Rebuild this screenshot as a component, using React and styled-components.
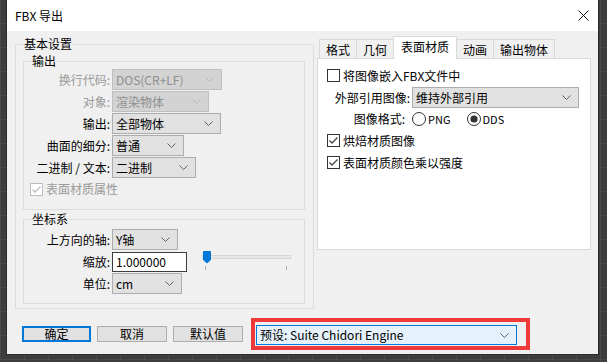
import React from 'react';
import styled, { createGlobalStyle } from 'styled-components';

const Global = createGlobalStyle`
  html, body { margin: 0; padding: 0; }
  body {
    width: 607px; height: 362px; overflow: hidden;
    background: #3c3c3c;
    font-family: "Noto Sans CJK SC", "Noto Sans", sans-serif;
    font-size: 12px;
    color: #000;
  }
`;

const Desktop = styled.div`
  width: 607px; height: 362px; box-sizing: border-box;
  padding-left: 7px;
  background-color: #3d3d3d;
  background-image:
    linear-gradient(90deg, rgba(255,255,255,0.06) 1px, transparent 1px),
    linear-gradient(0deg, rgba(255,255,255,0.06) 1px, transparent 1px);
  background-size: 24px 24px;
  display: flex; align-items: flex-start;
`;

const Dialog = styled.div`
  width: 591px; height: 354px;
  background: #f0f0f0;
  display: flex; flex-direction: column;
  box-shadow: 0 0 0 1px #2b2b2b;
`;

const TitleBar = styled.div`
  height: 31px; flex-shrink: 0;
  background: #fff;
  display: flex; align-items: center; justify-content: space-between;
  padding: 0 9px 0 8px;
  font-size: 12px; line-height: 16px;
`;

const Body = styled.div`
  flex: 1; display: flex; flex-direction: column;
`;

const TopSection = styled.div`
  height: 278px; display: flex; align-items: flex-start;
`;

const GroupBox = styled.div`
  position: relative;
  box-sizing: border-box;
  border: 1px solid #dcdcdc;
  width: ${p => p.$w}px;
  height: ${p => p.$h}px;
  padding: ${p => p.$pad};
  display: flex; flex-direction: column;
  gap: ${p => p.$gap || 0}px;
`;

const OuterGroup = styled(GroupBox)`
  margin: 13px 0 0 8px;
`;

const Legend = styled.span`
  position: absolute; top: -9px; left: 7px;
  background: #f0f0f0; padding: 0 1px;
  font-size: 12px; line-height: 16px;
`;

const Rows = styled.div`
  display: flex; flex-direction: column; gap: 1px;
`;

const Row = styled.div`
  display: flex; align-items: center; height: 21px;
  margin-top: ${p => p.$mt || 0}px;
`;

const Label = styled.div`
  width: ${p => p.$w || 88}px; box-sizing: border-box;
  padding-right: 2px; text-align: right;
  color: ${p => (p.$disabled ? '#9a9a9a' : '#000')};
  line-height: 16px; white-space: nowrap;
`;

const SelectBox = styled.div`
  box-sizing: border-box;
  width: ${p => p.$w}px; height: ${p => p.$h || 21}px;
  border: 1px solid ${p => (p.$disabled ? '#bfbfbf' : p.$focus ? '#0078d7' : '#adadad')};
  background: ${p => (p.$disabled ? '#d3d3d3' : p.$focus ? '#e5f1fb' : '#e1e1e1')};
  color: ${p => (p.$disabled ? '#8e8e8e' : '#000')};
  display: flex; align-items: center; justify-content: space-between;
  padding: 0 7px 0 3px;
  line-height: 16px; white-space: nowrap;
`;

const TextInput = styled.div`
  box-sizing: border-box;
  width: 75px; height: 20px;
  border: 1px solid #3c3c3c;
  background: #fff;
  display: flex; align-items: center;
  padding: 0 3px; line-height: 16px;
`;

const CheckRow = styled.label`
  display: flex; align-items: center; gap: 3px;
  height: ${p => p.$h || 16}px;
  margin: ${p => p.$m || '0'};
  color: ${p => (p.$disabled ? '#9a9a9a' : '#000')};
  line-height: 16px; white-space: nowrap;
`;

const RadioGroup = styled.div`
  display: flex; align-items: center;
  margin-left: 5px;
  font-size: 11px; line-height: 14px;
`;

const RadioItem = styled.span`
  display: flex; align-items: center; gap: 2px;
  margin-right: ${p => p.$mr || 0}px;
`;

const SliderWrap = styled.div`
  margin-left: 15px; display: flex; align-items: flex-start; height: 21px;
`;

const TabsArea = styled.div`
  margin: 5px 0 0 3px; width: 274px;
  display: flex; flex-direction: column;
`;

const TabStrip = styled.div`
  display: flex; align-items: flex-end; height: 22px; padding-left: 2px;
  position: relative; z-index: 1;
`;

const Tab = styled.div`
  box-sizing: border-box;
  height: ${p => (p.$active ? 23 : 19)}px;
  margin-bottom: ${p => (p.$active ? -1 : 0)}px;
  margin-left: -1px;
  padding: ${p => (p.$active ? '2px 7px 0' : '1px 6px 0')};
  border: 1px solid #d9d9d9;
  border-bottom: 0;
  background: ${p => (p.$active ? '#fff' : '#f0f0f0')};
  display: flex; align-items: ${p => (p.$active ? 'flex-start' : 'center')};
  line-height: 16px; white-space: nowrap;
  &:first-child { margin-left: 0; }
`;

const Panel = styled.div`
  box-sizing: border-box;
  height: 192px;
  border: 1px solid #d9d9d9;
  background: #fff;
  padding: 10px 0 0 9px;
  display: flex; flex-direction: column;
`;

const BottomBar = styled.div`
  display: flex; align-items: center;
  margin-top: 9px; padding-left: 15px; height: 32px;
`;

const Button = styled.div`
  box-sizing: border-box;
  width: ${p => p.$w}px; height: 16px;
  margin-right: ${p => p.$mr}px;
  border: ${p => (p.$default ? '2px solid #0078d7' : '1px solid #adadad')};
  background: #e1e1e1;
  display: flex; align-items: center; justify-content: center;
  line-height: 14px; font-size: 12px;
`;

const Highlight = styled.div`
  box-sizing: border-box;
  border: 4px solid #f0393b;
  width: 279px; height: 32px;
  padding: 3px 8px 0 1px;
  margin-left: 2px;
`;

const Chevron = ({ color = '#606060' }) => (
  <svg width="9" height="5" viewBox="0 0 9 5" style={{ flexShrink: 0 }}>
    <polyline points="0.5,0.5 4.5,4.5 8.5,0.5" fill="none" stroke={color} strokeWidth="1" />
  </svg>
);

const Check = ({ checked = true, disabled = false }) => {
  const c = disabled ? '#bcbcbc' : '#333';
  return (
    <svg width="13" height="13" viewBox="0 0 13 13" style={{ flexShrink: 0 }}>
      <rect x="0.5" y="0.5" width="12" height="12" fill="#fff" stroke={c} />
      {checked && (
        <polyline points="2.5,6.5 5,9 10.5,3.5" fill="none" stroke={disabled ? '#bcbcbc' : '#444'} strokeWidth="1.3" />
      )}
    </svg>
  );
};

const Radio = ({ on }) => (
  <svg width="14" height="14" viewBox="0 0 14 14" style={{ flexShrink: 0 }}>
    <circle cx="7" cy="7" r="6.5" fill="#fff" stroke="#333" />
    {on && <circle cx="7" cy="7" r="3.6" fill="#333" />}
  </svg>
);

const CloseIcon = () => (
  <svg width="11" height="11" viewBox="0 0 11 11">
    <path d="M0.5 0.5 L10.5 10.5 M10.5 0.5 L0.5 10.5" stroke="#111" strokeWidth="1" />
  </svg>
);

const Slider = () => (
  <svg width="92" height="21" viewBox="0 0 92 21">
    <rect x="0.5" y="4.5" width="88" height="3" fill="#e7e7e7" stroke="#d6d6d6" />
    <line x1="3.5" y1="15" x2="3.5" y2="19" stroke="#aaa" />
    <line x1="84.5" y1="15" x2="84.5" y2="19" stroke="#aaa" />
    <path d="M1.5 0.5 H8.5 V9 L5 12 L1.5 9 Z" fill="#0078d7" stroke="#0078d7" />
  </svg>
);

const Select = ({ w, disabled, focus, h, children }) => (
  <SelectBox $w={w} $disabled={disabled} $focus={focus} $h={h}>
    <span>{children}</span>
    <Chevron color={disabled ? '#b5b5b5' : '#606060'} />
  </SelectBox>
);

export default function App() {
  return (
    <>
      <Global />
      <Desktop>
        <Dialog>
          <TitleBar>
            <span>FBX 导出</span>
            <CloseIcon />
          </TitleBar>
          <Body>
            <TopSection>
              <OuterGroup $w={299} $h={265} $pad="16px 0 0 7px" $gap={9}>
                <Legend>基本设置</Legend>
                <GroupBox $w={282} $h={149} $pad="7px 0 0 0">
                  <Legend>输出</Legend>
                  <Rows>
                    <Row>
                      <Label $disabled>换行代码:</Label>
                      <Select w={110} disabled>DOS(CR+LF)</Select>
                    </Row>
                    <Row>
                      <Label $disabled>对象:</Label>
                      <Select w={97} disabled>渲染物体</Select>
                    </Row>
                    <Row>
                      <Label>输出:</Label>
                      <Select w={109}>全部物体</Select>
                    </Row>
                    <Row>
                      <Label>曲面的细分:</Label>
                      <Select w={72}>普通</Select>
                    </Row>
                    <Row>
                      <Label>二进制 / 文本:</Label>
                      <Select w={84}>二进制</Select>
                    </Row>
                  </Rows>
                  <CheckRow $disabled $m="3px 0 0 6px">
                    <Check disabled />
                    <span>表面材质属性</span>
                  </CheckRow>
                </GroupBox>
                <GroupBox $w={282} $h={85} $pad="9px 0 0 0">
                  <Legend>坐标系</Legend>
                  <Rows>
                    <Row>
                      <Label>上方向的轴:</Label>
                      <Select w={66}>Y轴</Select>
                    </Row>
                    <Row>
                      <Label>缩放:</Label>
                      <TextInput>1.000000</TextInput>
                      <SliderWrap><Slider /></SliderWrap>
                    </Row>
                    <Row>
                      <Label>单位:</Label>
                      <Select w={70}>cm</Select>
                    </Row>
                  </Rows>
                </GroupBox>
              </OuterGroup>
              <TabsArea>
                <TabStrip>
                  <Tab>格式</Tab>
                  <Tab>几何</Tab>
                  <Tab $active>表面材质</Tab>
                  <Tab>动画</Tab>
                  <Tab>输出物体</Tab>
                </TabStrip>
                <Panel>
                  <CheckRow $h={13}>
                    <Check checked={false} />
                    <span>将图像嵌入FBX文件中</span>
                  </CheckRow>
                  <Row $mt={5}>
                    <Label $w={85}>外部引用图像:</Label>
                    <Select w={167}>维持外部引用</Select>
                  </Row>
                  <Row>
                    <Label $w={80}>图像格式:</Label>
                    <RadioGroup>
                      <RadioItem $mr={16}><Radio /><span>PNG</span></RadioItem>
                      <RadioItem><Radio on /><span>DDS</span></RadioItem>
                    </RadioGroup>
                  </Row>
                  <CheckRow $h={13} $m="5px 0 0 0">
                    <Check />
                    <span>烘焙材质图像</span>
                  </CheckRow>
                  <CheckRow $h={13} $m="9px 0 0 0">
                    <Check />
                    <span>表面材质颜色乘以强度</span>
                  </CheckRow>
                </Panel>
              </TabsArea>
            </TopSection>
            <BottomBar>
              <Button $w={69} $mr={6} $default>确定</Button>
              <Button $w={70} $mr={6}>取消</Button>
              <Button $w={70} $mr={6}>默认值</Button>
              <Highlight>
                <Select w={261} h={20} focus>预设: Suite Chidori Engine</Select>
              </Highlight>
            </BottomBar>
          </Body>
        </Dialog>
      </Desktop>
    </>
  );
}
